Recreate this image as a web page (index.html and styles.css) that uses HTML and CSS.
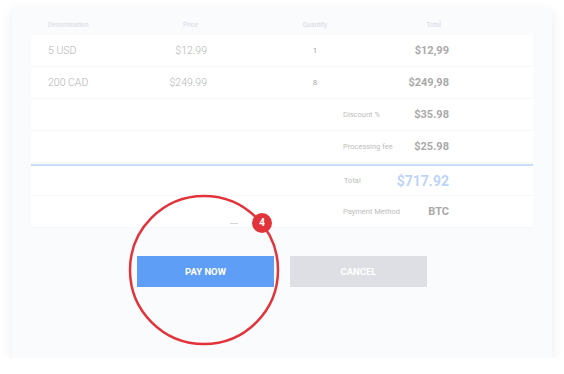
FILE: index.html
```html
<!DOCTYPE html>
<html lang="en">
<head>
    <meta charset="UTF-8">
    <meta name="viewport" content="width=device-width, initial-scale=1.0">
    <title>Checkout</title>
    <link rel="stylesheet" href="styles.css">
</head>
<body>

    <div class="card">
        <div class="order">
            <div class="head">
                <span>Denomination</span>
                <span class="h-price">Price</span>
                <span class="h-qty">Quantity</span>
                <span class="h-total">Total</span>
            </div>
            <div class="row">
                <span>5 USD</span>
                <span class="price">$12.99</span>
                <span class="qty">1</span>
                <span class="total">$12,99</span>
            </div>
            <div class="row">
                <span>200 CAD</span>
                <span class="price">$249.99</span>
                <span class="qty">8</span>
                <span class="total">$249,98</span>
            </div>
            <div class="sum">
                <span class="label">Discount %</span>
                <span class="value">$35.98</span>
            </div>
            <div class="sum">
                <span class="label">Processing fee</span>
                <span class="value">$25.98</span>
            </div>
            <div class="sum grand">
                <span class="label">Total</span>
                <span class="value">$717.92</span>
            </div>
            <div class="sum">
                <span class="label">Payment Method</span>
                <span class="value">BTC</span>
            </div>
        </div>
        <div class="dash"></div>
        <div class="actions">
            <button class="btn btn-pay">PAY NOW</button>
            <button class="btn btn-cancel">CANCEL</button>
        </div>

        <!-- highlight ring with step number -->
        <svg class="ring" width="200" height="200" viewBox="0 0 200 200">
            <circle cx="100" cy="100" r="74" fill="none" stroke="#e2333a" stroke-width="2.5"/>
        </svg>
        <div class="step">4</div>
    </div>

</body>
</html>
```

FILE: styles.css
```css
body {
    font-family: Roboto, "Liberation Sans", sans-serif;
    background-color: #fff;
    margin: 0;
    padding: 8px 12px 0;
}
.card {
    position: relative;
    width: 540px;
    height: 350px;
    box-sizing: border-box;
    padding-top: 7px;
    background: #fafbfd;
    box-shadow: 0 4px 12px rgba(0, 0, 0, 0.08);
}
.order {
    margin: 0 19px;
}
.head, .row {
    display: grid;
    grid-template-columns: 100px 59px 1fr 74px;
    padding: 0 84px 0 17px;
    align-items: center;
}
.head {
    height: 20px;
    font-size: 6.5px;
    font-weight: 500;
    color: #dcdfe7;
}
.h-price {
    text-align: right;
    padding-right: 9px;
}
.h-qty {
    text-align: center;
    padding-left: 48px;
}
.h-total {
    text-align: right;
    padding-right: 8px;
}
.row {
    height: 32px;
    background: #fff;
    border-bottom: 1px solid #f6f7f9;
    box-sizing: border-box;
    font-size: 10.5px;
    font-weight: 300;
    color: #b3b3b3;
}
.price {
    text-align: right;
}
.qty {
    text-align: center;
    padding-left: 48px;
    font-size: 8px;
    font-weight: 400;
    color: #a8a8a8;
}
.total {
    text-align: right;
    font-size: 11px;
    font-weight: 700;
    color: #a9a9a9;
}
.sum {
    display: flex;
    align-items: center;
    height: 32px;
    box-sizing: border-box;
    padding: 0 84px 0 312px;
    background: #fff;
    border-bottom: 1px solid #f6f7f9;
}
.sum .label {
    font-size: 7.5px;
    color: #bdbdbd;
}
.sum .value {
    flex: 1;
    text-align: right;
    font-size: 11px;
    font-weight: 700;
    color: #a9a9a9;
}
.grand {
    border-top: 2px solid #c9dcf8;
    margin-top: 1px;
}
.grand .label {
    padding-left: 1px;
}
.grand .value {
    font-size: 14px;
    color: #bed4f8;
}
.dash {
    width: 8px;
    height: 1px;
    margin: 0 0 0 218px;
    position: relative;
    top: -5px;
    background: #d6d8de;
}
.actions {
    display: flex;
    justify-content: center;
    gap: 16px;
    margin-top: 27px;
}
.btn {
    width: 137px;
    height: 31px;
    border: none;
    font-family: inherit;
    font-size: 9.5px;
    font-weight: 700;
    color: #fff;
}
.btn-pay {
    background: #5f9ef6;
}
.btn-cancel {
    background: #dddfe5;
}
.ring {
    position: absolute;
    left: 92px;
    top: 162px;
}
.step {
    position: absolute;
    left: 240px;
    top: 205px;
    width: 20px;
    height: 20px;
    border-radius: 50%;
    background: #e2333a;
    color: #fff;
    font-size: 10px;
    font-weight: 700;
    text-align: center;
    line-height: 20px;
}
```
